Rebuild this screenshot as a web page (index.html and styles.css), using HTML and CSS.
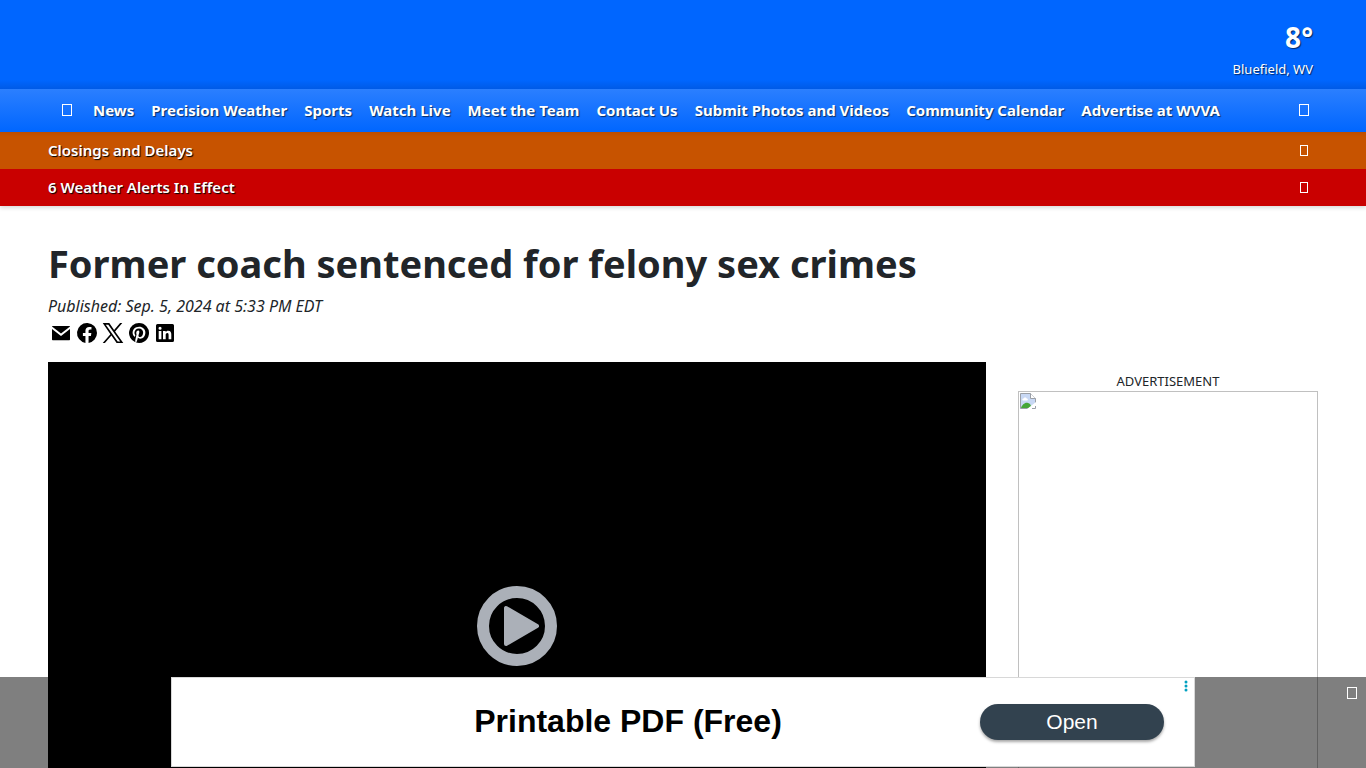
FILE: index.html
```
<!DOCTYPE html>
<html lang="en">
<head>
<meta charset="utf-8">
<meta name="viewport" content="width=device-width, initial-scale=1">
<title>Former coach sentenced for felony sex crimes</title>
<link rel="stylesheet" href="styles.css">
</head>
<body>
<header class="site-header">
  <div class="masthead">
    <a class="weather" href="#">
      <span class="temperature">8°</span>
      <span class="city">Bluefield, WV</span>
    </a>
  </div>
  <nav class="main-nav" aria-label="Main">
    <button class="icon-button menu-button" type="button" aria-label="Menu"><span class="glyph"></span></button>
    <ul class="nav-list">
      <li><a href="#">News</a></li>
      <li><a href="#">Precision Weather</a></li>
      <li><a href="#">Sports</a></li>
      <li><a href="#">Watch Live</a></li>
      <li><a href="#">Meet the Team</a></li>
      <li><a href="#">Contact Us</a></li>
      <li><a href="#">Submit Photos and Videos</a></li>
      <li><a href="#">Community Calendar</a></li>
      <li><a href="#">Advertise at WVVA</a></li>
    </ul>
    <button class="icon-button search-button" type="button" aria-label="Search"><span class="glyph"></span></button>
  </nav>
  <div class="alert alert-closings">
    <a href="#">Closings and Delays</a>
    <button class="icon-button" type="button" aria-label="Open closings"><span class="glyph glyph-small"></span></button>
  </div>
  <div class="alert alert-weather">
    <a href="#">6 Weather Alerts In Effect</a>
    <button class="icon-button" type="button" aria-label="Open weather alerts"><span class="glyph glyph-small"></span></button>
  </div>
</header>

<main class="article">
  <h1 class="headline">Former coach sentenced for felony sex crimes</h1>
  <p class="published">Published: Sep. 5, 2024 at 5:33 PM EDT</p>
  <div class="share">
    <a href="#" aria-label="Email"><svg viewBox="0 0 24 24"><path d="M3.500 5h17a.5.5 0 0 1 .5.500L12 12.500 3 5.500a.5.5 0 0 1 .5-.5z"/><path d="M3 8l9 7 9-7v10.500a.7.7 0 0 1-.7.700H3.700a.7.7 0 0 1-.7-.7z"/></svg></a>
    <a href="#" aria-label="Facebook"><svg viewBox="0 0 24 24"><path d="M22 12a10 10 0 1 0-11.560 9.880v-6.990H7.900V12h2.540V9.800c0-2.510 1.490-3.890 3.780-3.890 1.090 0 2.240.19 2.240.19v2.460H15.200c-1.240 0-1.630.77-1.630 1.560V12h2.780l-.45 2.890h-2.330v6.990A10 10 0 0 0 22 12z"/></svg></a>
    <a href="#" aria-label="X"><svg viewBox="0 0 24 24"><path d="M14.100 10.600 21.300 2h-2.200l-6 7.100L8.300 2H1.700l7.700 11.300L1.700 22h2.200l6.500-7.500 5.200 7.500h6.700zM4.800 3.700h2.500l11.900 16.700h-2.500z"/></svg></a>
    <a href="#" aria-label="Pinterest"><svg viewBox="0 0 24 24"><path d="M12 2a10 10 0 0 0-3.640 19.310c-.09-.79-.17-2 .03-2.860l1.170-4.970s-.3-.6-.3-1.480c0-1.390.81-2.430 1.810-2.430.86 0 1.270.64 1.270 1.410 0 .86-.55 2.140-.83 3.330-.24.99.5 1.810 1.480 1.810 1.780 0 3.140-1.880 3.140-4.580 0-2.390-1.720-4.070-4.180-4.070-2.840 0-4.510 2.130-4.510 4.340 0 .86.33 1.780.74 2.280a.3.3 0 0 1 .07.290l-.28 1.130c-.04.18-.14.22-.33.13-1.250-.58-2.030-2.400-2.030-3.870 0-3.150 2.290-6.040 6.600-6.040 3.460 0 6.160 2.470 6.160 5.770 0 3.440-2.170 6.210-5.180 6.210-1.010 0-1.960-.53-2.290-1.150l-.62 2.370c-.23.87-.83 1.960-1.240 2.620A10 10 0 1 0 12 2z"/></svg></a>
    <a href="#" aria-label="LinkedIn"><svg viewBox="0 0 24 24"><path fill-rule="evenodd" d="M4.500 3h15A1.500 1.500 0 0 1 21 4.500v15a1.500 1.500 0 0 1-1.500 1.500h-15A1.500 1.500 0 0 1 3 19.500v-15A1.500 1.500 0 0 1 4.500 3zM5.700 9.900v8.400h2.700V9.900zm1.350-4.200a1.550 1.550 0 1 0 0 3.100 1.550 1.550 0 0 0 0-3.100zM10 9.900v8.400h2.700v-4.200c0-1.100.3-2.100 1.600-2.100s1.300 1.200 1.300 2.200v4.100h2.700v-4.600c0-2.300-.5-4-3.100-4-1.300 0-2.100.7-2.500 1.400V9.900z"/></svg></a>
  </div>
  <div class="columns">
    <div class="player">
      <button class="play-button" type="button" aria-label="Play video"><svg viewBox="0 0 80 80"><circle cx="40" cy="40" r="34" fill="none" stroke="#abb0b8" stroke-width="12"/><path d="M29 22v36L60 40z" fill="#abb0b8" stroke="#abb0b8" stroke-width="4" stroke-linejoin="round"/></svg></button>
    </div>
    <aside class="sidebar">
      <span class="ad-label">ADVERTISEMENT</span>
      <div class="ad-frame">
        <svg class="missing-image" viewBox="0 0 16 16" aria-hidden="true"><path d="M.5.5h10l5 5v10H.5z" fill="#c8d8f4" stroke="#9a9fa6"/><path d="M10.500.5v5h5" fill="#fff" stroke="#9a9fa6"/><path d="M3 7.500c-1 0-1-2 .5-2 .5-1.500 3-1.500 3.200 0 1.500 0 1.500 2 .3 2z" fill="#fff"/><path d="M1 15c1-3 4-6 7-5 2 .5 3 2 3.500 5z" fill="#45a638"/><path d="M7 16l9-7v7z" fill="#fff"/><path d="M15.500 7v2M12 15.500h3.500V13" fill="none" stroke="#9a9fa6"/></svg>
      </div>
    </aside>
  </div>
</main>

<div class="sticky-ad">
  <div class="banner">
    <div class="banner-title">Printable PDF (Free)</div>
    <div class="banner-action"><button class="open-button" type="button">Open</button></div>
    <button class="ad-options" type="button" aria-label="Ad options"><svg viewBox="0 0 4 12"><circle cx="2" cy="2" r="1.500"/><circle cx="2" cy="6" r="1.500"/><circle cx="2" cy="10" r="1.500"/></svg></button>
  </div>
  <button class="icon-button close-button" type="button" aria-label="Close ad"><span class="glyph"></span></button>
</div>
</body>
</html>
```
FILE: styles.css
```
* { box-sizing: border-box; }
html { scrollbar-width: none; }
body {
  margin: 0;
  background: #fff;
  color: #212529;
  font-family: "Segoe UI", "Noto Sans", sans-serif;
  font-size: 15px;
  line-height: 24px;
}
a { color: inherit; text-decoration: none; }
button { margin: 0; padding: 0; border: 0; background: none; color: inherit; font: inherit; cursor: pointer; }
svg { display: block; width: 100%; height: 100%; }

.site-header { color: #fff; box-shadow: 0 2px 4px rgba(0, 0, 0, .15); }
.masthead {
  display: flex;
  justify-content: flex-end;
  height: 89px;
  padding: 16px 53px 0 48px;
  background: linear-gradient(#06f 80px, #005ae6);
}
.weather { display: flex; flex-direction: column; align-items: flex-end; text-shadow: 1px 1px 1px rgba(0, 0, 0, .6); }
.temperature { font-size: 28px; font-weight: 700; line-height: 42px; }
.city { font-size: 13px; line-height: 22px; }

.main-nav {
  display: flex;
  align-items: center;
  height: 43px;
  padding: 0 48px 2px;
  background: linear-gradient(#2b7fff, #06f);
}
.nav-list {
  display: flex;
  flex: 1;
  gap: 17px;
  margin: 0;
  padding: 0;
  list-style: none;
  font-size: 15px;
  font-weight: 700;
  white-space: nowrap;
  text-shadow: 1px 1px 1px rgba(0, 0, 0, .6);
}
.icon-button { display: grid; place-items: center; width: 28px; height: 28px; }
.menu-button { width: 37px; margin-right: 8px; }
.glyph { width: 10px; height: 12px; border: 1px solid #fff; }
.glyph-small { width: 8px; height: 11px; }

.alert {
  display: flex;
  align-items: center;
  justify-content: space-between;
  height: 37px;
  padding: 0 48px;
  font-weight: 600;
  text-shadow: 1px 1px 1px #000;
}
.alert a { padding-bottom: 2px; }
.alert-closings { background: linear-gradient(#bd4d00, #c75300 5px); }
.alert-weather { background: #c90000; }

.article { padding: 35px 48px 0; }
.headline { margin: 0; font-size: 38px; font-weight: 700; line-height: 44px; }
.published { margin: 9px 0 0; font-size: 16px; font-style: italic; }
.share { display: flex; gap: 2px; padding: 3px 1px 0; }
.share a { width: 24px; height: 24px; }

.columns { display: flex; align-items: flex-start; gap: 32px; margin-top: 17px; }
.player { display: grid; flex: 1; place-items: center; aspect-ratio: 16 / 9; background: #000; }
.play-button { width: 80px; height: 80px; }
.sidebar { width: 300px; padding-top: 9px; }
.ad-label { display: block; font-size: 13px; line-height: 20px; text-align: center; }
.ad-frame { height: 600px; border: 1px solid #c0c0c0; }
.missing-image { width: 16px; height: 16px; margin: 1px; }

.sticky-ad {
  position: fixed;
  right: 0;
  bottom: 0;
  left: 0;
  display: flex;
  justify-content: center;
  height: 91px;
  background: rgba(0, 0, 0, .5);
  color: #fff;
}
.banner {
  position: relative;
  display: flex;
  align-items: center;
  width: 1024px;
  height: 90px;
  border: 1px solid #d8d8d8;
  background: #fff;
  font-family: Arial, "Liberation Sans", sans-serif;
}
.banner-title {
  flex: 1;
  padding: 0 0 2px 104px;
  color: #000;
  font-size: 32px;
  font-weight: 700;
  line-height: 40px;
  text-align: center;
}
.banner-action { padding-right: 30px; }
.open-button {
  width: 184px;
  height: 36px;
  border-radius: 18px;
  background: #32424f;
  box-shadow: 0 2px 3px rgba(0, 0, 0, .35);
  color: #fff;
  font-size: 21px;
}
.ad-options { position: absolute; top: 2px; right: 6px; width: 4px; height: 12px; fill: #00a0c0; }
.close-button { position: absolute; top: 2px; right: 0; }
```
